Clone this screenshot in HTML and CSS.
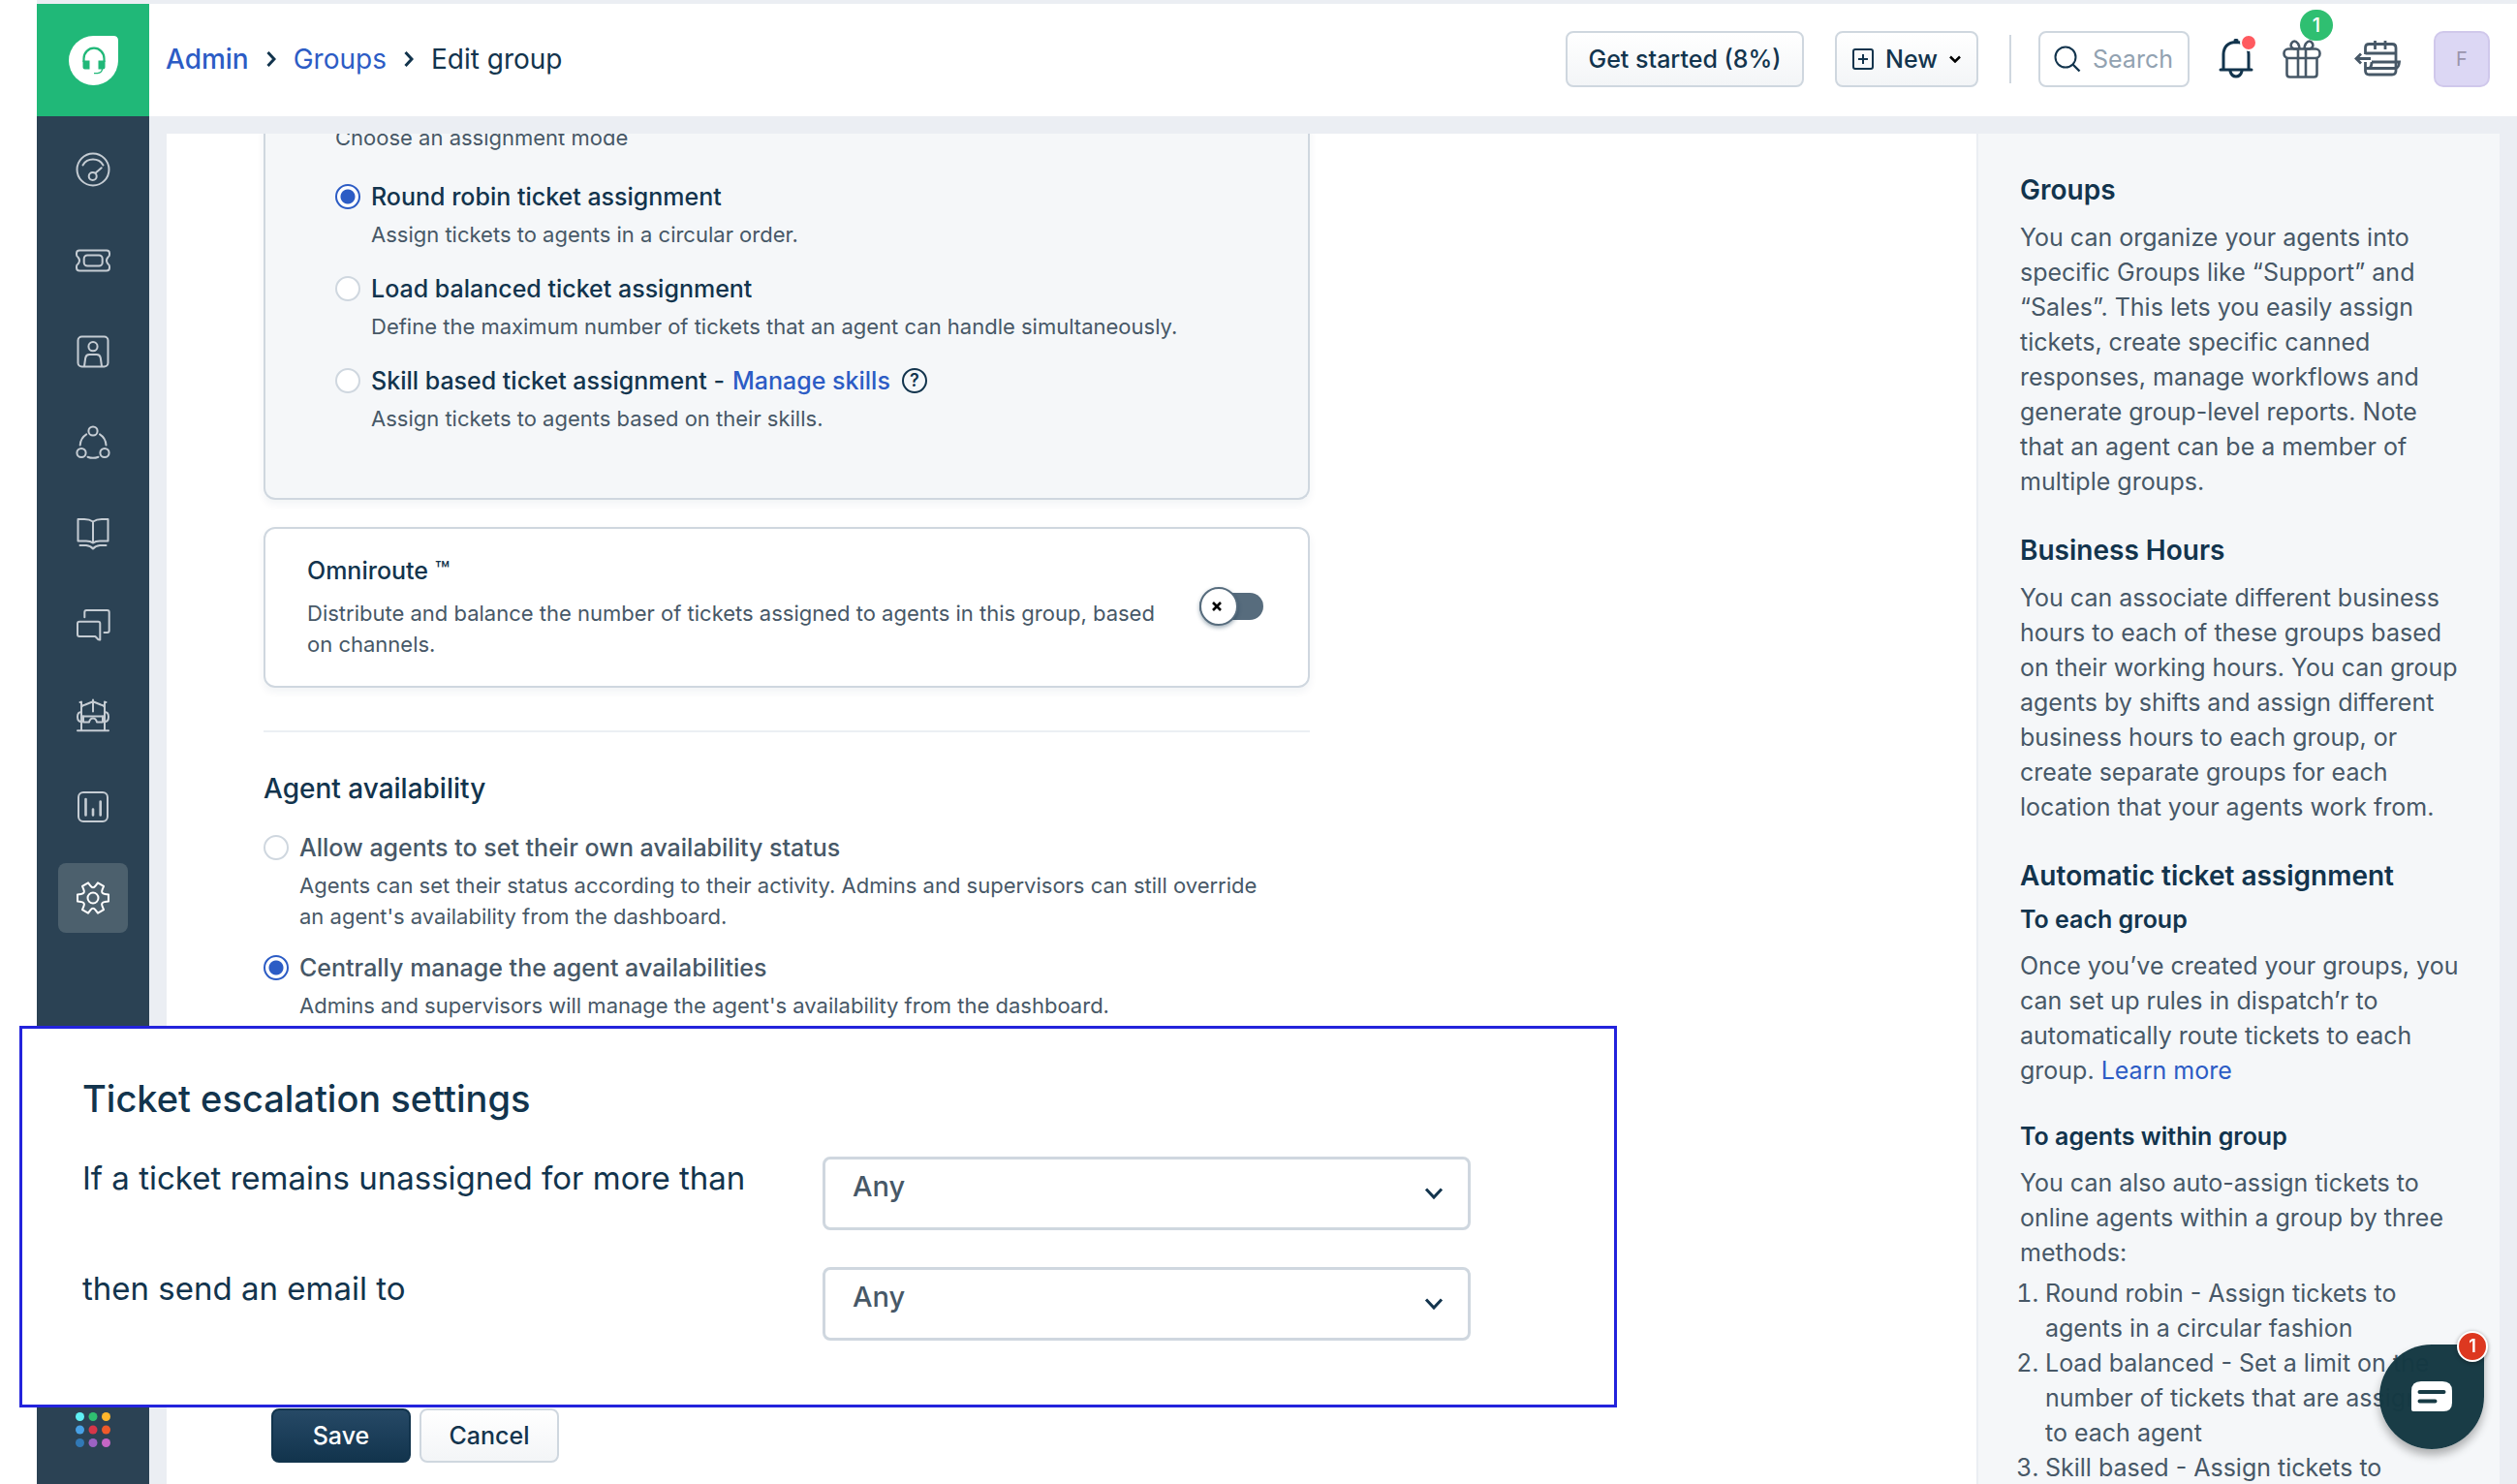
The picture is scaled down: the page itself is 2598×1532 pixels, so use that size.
FILE: index.html
```html
<!DOCTYPE html>
<html lang="en">

<head>
  <meta charset="UTF-8">
  <meta
    name="viewport"
    content="width=device-width, initial-scale=1.0"
  >

  <title>Edit group</title>

  <link rel="stylesheet" href="styles.css">
</head>

<body>
  <div class="app">
    <nav class="sidebar" aria-label="Main">
      <a href="#" class="sidebar__logo" aria-label="Home">
        <svg width="51" height="51" viewBox="0 0 51 51">
          <path fill="#fff" d="M25.500 0H46Q51 0 51 5V25.500A25.500 25.500 0 1 1 25.500 0Z" />
          <path fill="none" stroke="#20b878" stroke-width="2.200" d="M15.500 27V23.500a10.500 10.800 0 0 1 21 0V27" />
          <path fill="#20b878" d="M14.500 25.500h7v9h-5a2 2 0 0 1-2-2zM30.500 25.500h7v7a2 2 0 0 1-2 2h-5z" />
          <path fill="none" stroke="#20b878" stroke-width="1.300" d="M34.500 34q0 4-5 4.700h-3.500" />
        </svg>
      </a>

      <ul class="sidebar__list">
        <li>
          <a href="#" class="sidebar__item" aria-label="Dashboard">
            <svg class="icon" viewBox="0 0 36 36">
              <circle cx="18" cy="18" r="16.500" />
              <path d="M7.500 13.500a12.300 12.300 0 0 1 21 0M20.700 21.500l6-5.300" />
              <circle cx="17.700" cy="25" r="4" />
            </svg>
          </a>
        </li>
        <li>
          <a href="#" class="sidebar__item" aria-label="Tickets">
            <svg class="icon" viewBox="0 0 36 36">
              <path d="M4 7.500h28q3 0 3 3v1.500q0 1.500-1.500 2.500q-3 3.500 0 7q1.500 1 1.500 2.500v1.500q0 3-3 3H4q-3 0-3-3v-1.500q0-1.500 1.500-2.500q3-3.500 0-7Q1 13.500 1 12v-1.500q0-3 3-3z" />
              <rect x="8.700" y="12.500" width="19" height="11" rx="3.500" />
            </svg>
          </a>
        </li>
        <li>
          <a href="#" class="sidebar__item" aria-label="Contacts">
            <svg class="icon" viewBox="0 0 36 36">
              <rect x="2.500" y="2.500" width="31" height="31" rx="4" />
              <circle cx="18" cy="12.700" r="4.600" />
              <path d="M9 33l1.200-8.500q.6-3.500 4-3.500h7.600q3.400 0 4 3.500L27 33" />
            </svg>
          </a>
        </li>
        <li>
          <a href="#" class="sidebar__item" aria-label="Social">
            <svg class="icon" viewBox="0 0 36 36">
              <circle cx="18" cy="6" r="4.600" />
              <circle cx="6" cy="28.500" r="4.600" />
              <circle cx="30" cy="28.500" r="4.600" />
              <path d="M4.700 20.500q.5-7.500 6.500-11.200M25 9.300q6 3.700 6.500 11.200M12.500 32.700q5.500 2.200 11 0" />
            </svg>
          </a>
        </li>
        <li>
          <a href="#" class="sidebar__item" aria-label="Solutions">
            <svg class="icon" viewBox="0 0 36 36">
              <path d="M18 5.500Q14.500 3 9 3H2.500v22.500H11q4.500 0 7 2q2.500-2 7-2h8.500V3H27q-5.500 0-9 2.500zM18 5.500v22M4.500 30h6.500q4.500.5 7 3.500q2.500-3 7-3.500h6.500" />
            </svg>
          </a>
        </li>
        <li>
          <a href="#" class="sidebar__item" aria-label="Forums">
            <svg class="icon" viewBox="0 0 36 36">
              <path d="M9.300 10.300V5q0-2 2-2h21.400q2 0 2 2v19q0 2-2 2h-3.200" />
              <path d="M4 14.700h19.300q2 0 2 2v16.800q-2 .5-3-1.500l-2-2H4q-2 0-2-2V16.700q0-2 2-2z" />
            </svg>
          </a>
        </li>
        <li>
          <a href="#" class="sidebar__item" aria-label="Bots">
            <svg class="icon" viewBox="0 0 36 36">
              <path d="M6 3.500V33M30 3.500V33M2 33.300h32M4.500 4H6M30 4h1.500M6 9q1-2 4-2.500l8-3.200l8 3.200q3 .5 4 2.500M18 1.500v12M6 18.500h24" />
              <path d="M8 18.500v6h6q1-4 4-4t4 4h6v-6M6 14Q2 14 2 19t4 5M30 14q4 0 4 5t-4 5" />
            </svg>
          </a>
        </li>
        <li>
          <a href="#" class="sidebar__item" aria-label="Analytics">
            <svg class="icon" viewBox="0 0 36 36">
              <rect x="3" y="3" width="30" height="30" rx="5" />
              <path stroke-width="2.600" d="M10.500 10v16.500M18 20.500v6M25.700 12.500v14" />
            </svg>
          </a>
        </li>
        <li>
          <a href="#" class="sidebar__item sidebar__item--active" aria-label="Admin">
            <svg class="icon" viewBox="-18 -18 36 36">
              <path d="M12.300-4L16-3.500V3.500L12.300 4Q7.800 4.500 9.610 8.650L11.030 12.110L4.970 15.610L2.690 12.650Q0 9-2.690 12.650L-4.970 15.610L-11.030 12.110L-9.610 8.650Q-7.800 4.500-12.300 4L-16 3.500V-3.500L-12.300-4Q-7.800-4.500-9.610-8.650L-11.030-12.110L-4.970-15.610L-2.690-12.650Q0-9 2.690-12.650L4.970-15.610L11.030-12.110L9.610-8.650Q7.800-4.500 12.300-4Z" />
              <circle r="5.500" />
            </svg>
          </a>
        </li>
      </ul>

      <a href="#" class="sidebar__switcher" aria-label="Switch product">
        <svg width="36" height="36" viewBox="0 0 36 36">
          <circle cx="4.500" cy="4.500" r="4.500" fill="#5ff0f5" />
          <circle cx="18" cy="4.500" r="4.500" fill="#2fbf71" />
          <circle cx="31.500" cy="4.500" r="4.500" fill="#ffb72c" />
          <circle cx="4.500" cy="18" r="4.500" fill="#48a1e6" />
          <circle cx="18" cy="18" r="4.500" fill="#d63649" />
          <circle cx="31.500" cy="18" r="4.500" fill="#ee5a2a" />
          <circle cx="4.500" cy="31.500" r="4.500" fill="#3178b5" />
          <circle cx="18" cy="31.500" r="4.500" fill="#9b62c3" />
          <circle cx="31.500" cy="31.500" r="4.500" fill="#c466c5" />
        </svg>
      </a>
    </nav>

    <div class="page">
      <header class="header">
        <nav class="breadcrumb" aria-label="Breadcrumb">
          <a href="#" class="breadcrumb__link breadcrumb__link--strong">Admin</a>
          <svg width="10" height="18" viewBox="0 0 10 18"><path d="M1.500 2l6.500 7l-6.500 7" /></svg>
          <a href="#" class="breadcrumb__link">Groups</a>
          <svg width="10" height="18" viewBox="0 0 10 18"><path d="M1.500 2l6.500 7l-6.500 7" /></svg>
          <span>Edit group</span>
        </nav>

        <div class="toolbar">
          <button type="button" class="button toolbar__start">Get started (8%)</button>

          <button type="button" class="button toolbar__new">
            <svg width="22" height="22" viewBox="0 0 22 22" fill="none" stroke="#12344d" stroke-width="2">
              <rect x="1" y="1" width="20" height="20" rx="2" />
              <path d="M11 6v10M6 11h10" />
            </svg>
            New
            <svg width="12" height="8" viewBox="0 0 12 8" fill="none" stroke="#000" stroke-width="2.500">
              <path d="M1 1.500l5 5l5-5" />
            </svg>
          </button>

          <span class="toolbar__divider"></span>

          <label class="search">
            <svg width="28" height="28" viewBox="0 0 28 28" fill="none" stroke="#12344d" stroke-width="2">
              <circle cx="12" cy="12" r="10.500" />
              <path stroke-width="2.400" d="M19.500 19.500l7 7" />
            </svg>
            <input type="text" class="search__input" placeholder="Search" aria-label="Search">
          </label>

          <button type="button" class="toolbar__icon toolbar__icon--bell" aria-label="Notifications">
            <svg width="36" height="40" viewBox="0 4 36 40" fill="none" stroke="#12344d" stroke-width="3" stroke-linecap="round">
              <path d="M5 35V19Q5.500 7 18 6.500Q30.500 7 31 19V35M2 35h32M17 4.500h2" />
              <path d="M12 36.500q1.500 5.500 6 5.500t6-5.500" />
              <circle cx="31" cy="7" r="8" fill="#ff5a5f" stroke="#fff" stroke-width="2" />
            </svg>
          </button>

          <button type="button" class="toolbar__icon toolbar__icon--gift" aria-label="What's new">
            <svg width="40" height="40" viewBox="0 0 40 40" fill="none" stroke="#475867" stroke-width="2.600">
              <rect x="1.500" y="9.500" width="37" height="9.500" rx="4.500" />
              <path d="M4.500 19v16.500q0 3 3 3h25q3 0 3-3V19M16 9.500v29M24 9.500v29" />
              <path d="M16 9.500H12Q7.500 8 9 4q3-5 7 0q1.500 2.500 1.500 5.500M24 9.500h4q4.500-1.500 3-5.500q-3-5-7 0q-1.500 2.500-1.500 5.500" />
            </svg>
            <span class="toolbar__count">1</span>
          </button>

          <button type="button" class="toolbar__icon toolbar__icon--shift" aria-label="Schedule">
            <svg width="48" height="38" viewBox="0 0 48 38" fill="none" stroke="#475867" stroke-width="2.800">
              <path d="M11.500 14V7.500q0-4 4-4h23.500q4 0 4 4V31q0 4-4 4H15.500q-4 0-4-4v-9" />
              <path d="M21.500 0v9M32 0v9M11.500 13h31.500M18 22h28.500q-.5 6-3.500 6.500H12M16 28.500q2-2 2-6.500" />
              <path d="M17 18.500H2M7 13.500l-5 5l5 5" />
            </svg>
          </button>

          <button type="button" class="avatar" aria-label="Profile">F</button>
        </div>
      </header>

      <main class="content">
        <form class="form">
          <div class="form__body">
            <fieldset class="card card--muted">
              <legend class="card__hint">Choose an assignment mode</legend>

              <div class="option">
                <input type="radio" name="mode" id="mode-robin" class="option__radio" checked>
                <div class="option__text">
                  <label for="mode-robin" class="option__label">Round robin ticket assignment</label>
                  <p class="option__description">Assign tickets to agents in a circular order.</p>
                </div>
              </div>

              <div class="option">
                <input type="radio" name="mode" id="mode-load" class="option__radio">
                <div class="option__text">
                  <label for="mode-load" class="option__label">Load balanced ticket assignment</label>
                  <p class="option__description">Define the maximum number of tickets that an agent can handle simultaneously.</p>
                </div>
              </div>

              <div class="option">
                <input type="radio" name="mode" id="mode-skill" class="option__radio">
                <div class="option__text">
                  <div class="option__line">
                    <label for="mode-skill" class="option__label">Skill based ticket assignment -</label>
                    <a href="#" class="option__link">Manage skills</a>
                    <span class="help">?</span>
                  </div>
                  <p class="option__description">Assign tickets to agents based on their skills.</p>
                </div>
              </div>
            </fieldset>

            <section class="card card--route">
              <div class="card__text">
                <label for="omniroute" class="option__label">Omniroute ™</label>
                <p class="option__description">Distribute and balance the number of tickets assigned to agents in this group, based on channels.</p>
              </div>
              <span class="toggle">
                <input type="checkbox" id="omniroute" class="toggle__input">
                <svg class="toggle__mark" width="10" height="10" viewBox="0 0 10 10" stroke="#000" stroke-width="2.600">
                  <path d="M1 1l8 8M9 1l-8 8" />
                </svg>
              </span>
            </section>

            <section class="availability">
              <h2 class="availability__title">Agent availability</h2>

              <div class="option option--soft">
                <input type="radio" name="availability" id="availability-own" class="option__radio">
                <div class="option__text">
                  <label for="availability-own" class="option__label">Allow agents to set their own availability status</label>
                  <p class="option__description">Agents can set their status according to their activity. Admins and supervisors can still override an agent's availability from the dashboard.</p>
                </div>
              </div>

              <div class="option option--soft">
                <input type="radio" name="availability" id="availability-central" class="option__radio" checked>
                <div class="option__text">
                  <label for="availability-central" class="option__label">Centrally manage the agent availabilities</label>
                  <p class="option__description">Admins and supervisors will manage the agent's availability from the dashboard.</p>
                </div>
              </div>
            </section>
          </div>

          <div class="form__actions">
            <button type="submit" class="button button--primary">Save</button>
            <button type="button" class="button">Cancel</button>
          </div>
        </form>

        <aside class="help-panel">
          <h3 class="help-panel__title">Groups</h3>
          <p>You can organize your agents into specific Groups like “Support” and “Sales”. This lets you easily assign tickets, create specific canned responses, manage workflows and generate group-level reports. Note that an agent can be a member of multiple groups.</p>

          <h3 class="help-panel__title">Business Hours</h3>
          <p>You can associate different business hours to each of these groups based on their working hours. You can group agents by shifts and assign different business hours to each group, or create separate groups for each location that your agents work from.</p>

          <h3 class="help-panel__title">Automatic ticket assignment</h3>
          <h4 class="help-panel__subtitle">To each group</h4>
          <p>Once you’ve created your groups, you can set up rules in dispatch’r to automatically route tickets to each group. <a href="#">Learn more</a></p>

          <h4 class="help-panel__subtitle">To agents within group</h4>
          <p>You can also auto-assign tickets to online agents within a group by three methods:</p>
          <ol class="help-panel__list">
            <li>Round robin - Assign tickets to agents in a circular fashion</li>
            <li>Load balanced - Set a limit on the number of tickets that are assigned to each agent</li>
            <li>Skill based - Assign tickets to agents based on skill</li>
          </ol>
        </aside>
      </main>
    </div>
  </div>

  <section class="escalation">
    <h2 class="escalation__title">Ticket escalation settings</h2>

    <div class="escalation__row">
      <label for="unassigned" class="escalation__label">If a ticket remains unassigned for more than</label>
      <div class="select">
        <select id="unassigned" class="select__field">
          <option>Any</option>
        </select>
        <svg class="select__arrow" width="20" height="14" viewBox="0 0 20 14"><path d="M2 2.500l8 8.500l8-8.500" /></svg>
      </div>
    </div>

    <div class="escalation__row">
      <label for="send-to" class="escalation__label">then send an email to</label>
      <div class="select">
        <select id="send-to" class="select__field">
          <option>Any</option>
        </select>
        <svg class="select__arrow" width="20" height="14" viewBox="0 0 20 14"><path d="M2 2.500l8 8.500l8-8.500" /></svg>
      </div>
    </div>
  </section>

  <button type="button" class="chat" aria-label="Open chat">
    <svg width="42" height="32" viewBox="0 0 42 32">
      <path fill="#fff" d="M10 0h22q10 0 10 10v12q0 9-9 9H2q-2 0-2-2V10Q0 0 10 0Z" />
      <path stroke="#183b45" stroke-width="4" stroke-linecap="round" d="M8.500 11h25M8.500 20.500h16" />
    </svg>
    <span class="chat__count">1</span>
  </button>
</body>

</html>
```

FILE: styles.css
```css
* {
  box-sizing: border-box;
}

body {
  margin: 0;
  height: 100vh;
  overflow: hidden;

  background-color: #fff;
  color: #475867;
  font-family: Inter, 'Liberation Sans', sans-serif;
  font-size: 25px;
  line-height: 36px;
}

a {
  color: #2c5cc5;
  text-decoration: none;
}

p,
h2,
h3,
h4,
ul,
ol {
  margin: 0;
  padding: 0;
}

button,
input,
select {
  font-family: inherit;
}

.app {
  display: flex;
  height: 100vh;
  margin-left: 38px;
  padding-top: 4px;
  background-color: #ebeef3;
}

/* Sidebar */

.sidebar {
  display: flex;
  flex-direction: column;
  flex-shrink: 0;
  width: 116px;
  padding-bottom: 38px;
  background-color: #2b4254;
}

.sidebar__logo {
  display: flex;
  align-items: center;
  justify-content: center;
  height: 116px;
  background-color: #20b878;
}

.sidebar__list {
  display: flex;
  flex-direction: column;
  align-items: center;
  gap: 22px;
  margin-top: 19px;
  list-style-type: none;
}

.sidebar__item {
  display: flex;
  align-items: center;
  justify-content: center;
  width: 72px;
  height: 72px;
  border-radius: 8px;
  color: #c5ccd3;
}

.sidebar__item--active {
  background-color: #4c606d;
  color: #fff;
}

.icon {
  width: 36px;
  height: 36px;
  fill: none;
  stroke: currentColor;
  stroke-width: 2;
  stroke-linecap: round;
  stroke-linejoin: round;
}

.sidebar__switcher {
  display: flex;
  justify-content: center;
  margin-top: auto;
}

/* Header */

.page {
  display: flex;
  flex-direction: column;
  flex: 1;
  min-width: 0;
}

.header {
  display: flex;
  align-items: center;
  justify-content: space-between;
  flex-shrink: 0;
  height: 116px;
  padding: 0 28px 2px 17px;
  background-color: #fff;
}

.breadcrumb {
  display: flex;
  align-items: center;
  gap: 18px;
  color: #12344d;
  font-size: 28px;
}

.breadcrumb svg {
  fill: none;
  stroke: #12344d;
  stroke-width: 3;
}

.breadcrumb__link--strong {
  font-weight: 500;
}

.toolbar {
  display: flex;
  align-items: center;
}

.button {
  display: flex;
  align-items: center;
  justify-content: center;
  height: 56px;
  min-width: 144px;
  border: 2px solid #cfd7df;
  border-radius: 8px;
  background: linear-gradient(#fff, #f3f5f7);
  color: #12344d;
  font-size: 25px;
  font-weight: 500;
  cursor: pointer;
}

.button--primary {
  border-color: #12344d;
  background: linear-gradient(#264966, #12344d);
  color: #fff;
}

.toolbar .button {
  height: 58px;
}

.toolbar__start {
  width: 246px;
}

.toolbar__new {
  gap: 12px;
  width: 148px;
  margin-left: 32px;
}

.toolbar__divider {
  width: 2px;
  height: 50px;
  margin: 0 28px 0 32px;
  background-color: #cfd7df;
}

.search {
  display: flex;
  align-items: center;
  gap: 12px;
  width: 156px;
  height: 58px;
  padding: 0 14px;
  border: 2px solid #cfd7df;
  border-radius: 8px;
}

.search svg {
  flex-shrink: 0;
}

.search__input {
  width: 100%;
  min-width: 0;
  padding: 0;
  border: none;
  outline: none;
  background: none;
  font-size: 25px;
}

.search__input::placeholder {
  color: #92a2b1;
  opacity: 1;
}

.toolbar__icon {
  position: relative;
  display: flex;
  padding: 0;
  border: none;
  background: none;
  cursor: pointer;
}

.toolbar__icon svg {
  overflow: visible;
}

.toolbar__icon--bell {
  margin-left: 30px;
}

.toolbar__icon--gift {
  margin-left: 30px;
}

.toolbar__icon--shift {
  margin: 0 34px;
}

.toolbar__count {
  position: absolute;
  top: -31px;
  right: -12px;

  width: 34px;
  height: 32px;
  border-radius: 16px;
  background-color: #2fbf71;
  color: #fff;
  font-size: 20px;
  font-weight: 500;
  line-height: 32px;
  text-align: center;
}

.avatar {
  width: 58px;
  height: 58px;
  padding: 0;
  border: 2px solid #d0c8eb;
  border-radius: 10px;
  background-color: #dcd7f4;
  color: #9a94ac;
  font-size: 20px;
  cursor: pointer;
}

/* Group form */

.content {
  display: flex;
  flex: 1;
  min-height: 0;
  padding: 18px 18px 0;
}

.form {
  display: flex;
  flex-direction: column;
  flex: 1;
  padding: 0 100px 22px;
  overflow: hidden;
  background-color: #fff;
}

.form__body {
  width: 1080px;
  margin-top: -16px;
}

.form__actions {
  display: flex;
  gap: 9px;
  margin-top: auto;
  padding-left: 8px;
}

.card {
  min-width: 0;
  margin: 0;
  border: 2px solid #cfd7df;
  border-radius: 12px;
  box-shadow: 0 4px 8px rgba(18, 52, 77, 0.06);
}

.card--muted {
  padding: 0 72px 44px;
  border-top: none;
  background-color: #f5f7f9;
}

.card__hint {
  float: left;
  width: 100%;
  padding: 4px 0 27px;
  font-size: 22px;
  line-height: 32px;
}

.card--route {
  display: flex;
  align-items: center;
  gap: 32px;
  margin-top: 28px;
  padding: 25px 46px 27px 43px;
}

.card__text {
  flex: 1;
}

.card--route .option__description {
  margin-top: 10px;
}

.option {
  display: flex;
  clear: both;
  gap: 11px;
  margin-bottom: 22px;
}

.option__radio {
  appearance: none;
  flex-shrink: 0;
  width: 26px;
  height: 26px;
  margin: 5px 0;
  border: 2px solid #cfd7df;
  border-radius: 50%;
  background-color: #fff;
}

.option__radio:checked {
  border-color: #2c5cc5;
  background: radial-gradient(#2c5cc5 7px, #fff 8px);
}

.option__label,
.option__link {
  color: #12344d;
  font-size: 25px;
  font-weight: 500;
  line-height: 36px;
}

.option__line {
  display: flex;
  align-items: center;
  gap: 8px;
}

.option__link {
  color: #2c5cc5;
}

.option__description {
  margin-top: 5px;
  font-size: 22px;
  line-height: 32px;
}

.option--soft {
  margin-bottom: 19px;
  padding-right: 32px;
}

.option--soft .option__label {
  color: #475867;
}

.help {
  width: 26px;
  height: 26px;
  margin-left: 4px;
  border: 2px solid #12344d;
  border-radius: 50%;
  color: #12344d;
  font-size: 18px;
  font-weight: 600;
  line-height: 22px;
  text-align: center;
}

.toggle {
  position: relative;
  display: flex;
  width: 66px;
}

.toggle__input {
  appearance: none;
  display: flex;
  align-items: center;
  width: 100%;
  height: 28px;
  margin: 0;
  border-radius: 14px;
  background-color: #576c7d;
}

.toggle__input::before {
  content: '';
  width: 36px;
  height: 36px;
  flex-shrink: 0;
  border: 2px solid #576c7d;
  border-radius: 50%;
  background-color: #fff;
  box-shadow: 0 2px 4px rgba(18, 52, 77, 0.4);
}

.toggle__mark {
  position: absolute;
  top: 9px;
  left: 13px;
  pointer-events: none;
}

.availability {
  margin-top: 44px;
  padding-top: 40px;
  border-top: 2px solid #ebeff3;
}

.availability__title {
  margin-bottom: 25px;
  color: #12344d;
  font-size: 28px;
  font-weight: 500;
  line-height: 36px;
}

/* Help panel */

.help-panel {
  flex-shrink: 0;
  width: 540px;
  padding: 40px 40px 0 43px;
  overflow: hidden;
  border-left: 2px solid #ebeef3;
  background-color: #f5f7f9;
}

.help-panel__title,
.help-panel__subtitle {
  margin-bottom: 13px;
  color: #12344d;
  font-size: 28px;
  font-weight: 600;
  line-height: 36px;
}

.help-panel__title + .help-panel__subtitle {
  margin-top: -4px;
}

.help-panel__subtitle {
  margin-bottom: 12px;
  font-size: 25px;
}

.help-panel p + .help-panel__title {
  margin-top: 35px;
}

.help-panel p + .help-panel__subtitle {
  margin-top: 32px;
}

.help-panel__list {
  margin-top: 6px;
  padding-left: 26px;
}

/* Escalation settings */

.escalation {
  position: fixed;
  bottom: 79px;
  left: 20px;

  display: flex;
  flex-direction: column;
  gap: 38px;
  width: 1649px;
  padding: 48px 148px 66px 62px;
  border: 3px solid #2323dc;
  background-color: #fff;
  color: #12344d;
}

.escalation__title {
  margin-bottom: -2px;
  font-size: 38px;
  font-weight: 500;
  line-height: 48px;
}

.escalation__row {
  display: flex;
  justify-content: space-between;
}

.escalation__label {
  font-size: 33px;
  line-height: 44px;
}

.select {
  position: relative;
  width: 669px;
}

.select__field {
  appearance: none;
  display: block;
  width: 100%;
  height: 76px;
  padding: 0 28px 16px;
  border: 3px solid #cfd7df;
  border-radius: 8px;
  background-color: #fff;
  color: #475867;
  font-size: 29px;
  font-weight: 500;
}

.select__arrow {
  position: absolute;
  top: 31px;
  right: 28px;
  fill: none;
  stroke: #12344d;
  stroke-width: 3;
  pointer-events: none;
}

/* Chat launcher */

.chat {
  position: fixed;
  right: 34px;
  bottom: 36px;

  display: flex;
  align-items: center;
  justify-content: center;
  width: 108px;
  height: 108px;
  padding: 0;
  border: none;
  border-radius: 50% 0 50% 50%;
  background-color: rgba(20, 56, 66, 0.98);
  box-shadow: 0 6px 10px rgba(0, 0, 0, 0.3);
  cursor: pointer;
}

.chat__count {
  position: absolute;
  top: -14px;
  right: -4px;

  width: 32px;
  height: 32px;
  border: 2px solid #fff;
  border-radius: 50%;
  background-color: #dd3820;
  box-shadow: 0 1px 4px rgba(0, 0, 0, 0.4);
  color: #fff;
  font-size: 18px;
  font-weight: 600;
  line-height: 28px;
}
```
